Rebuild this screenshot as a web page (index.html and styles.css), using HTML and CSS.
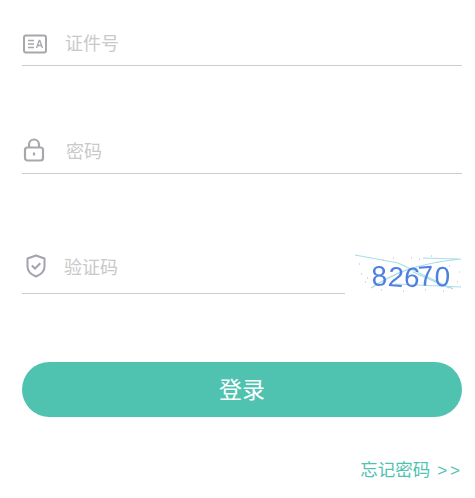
FILE: index.html
```html
<!DOCTYPE html>
<html lang="zh-CN">
<head>
    <meta charset="UTF-8">
    <meta name="viewport" content="width=device-width, initial-scale=1.0">
    <title>登录</title>
    <link rel="stylesheet" href="styles.css">
</head>
<body>

<form class="login">
    <div class="field field-id">
        <svg class="icon" width="24" height="20" viewBox="0 0 24 20" fill="none" stroke="#a8a8ac">
            <rect x="1" y="1.500" width="22" height="17" rx="2" stroke-width="2"/>
            <path d="M5 6.500h6M5 10h6M5 13.500h6" stroke-width="1.300"/>
            <path d="M13.500 14l2.700-7.500h.6l2.700 7.500M14.600 11.500h3.800" stroke-width="1.300"/>
        </svg>
        <span class="placeholder">证件号</span>
    </div>

    <div class="field field-pwd">
        <svg class="icon" width="22" height="24" viewBox="0 0 22 24" fill="none" stroke="#a8a8ac" stroke-width="2.200">
            <rect x="2" y="9.500" width="18" height="13" rx="2.500"/>
            <path d="M6 9.500V6.500a5 5 0 0 1 10 0v3"/>
            <path d="M11 14.500v3"/>
        </svg>
        <span class="placeholder">密码</span>
    </div>

    <div class="captcha-row">
        <div class="field field-code">
            <svg class="icon" width="20" height="24" viewBox="0 0 20 24" fill="none" stroke="#a3a3b0" stroke-width="2">
                <path d="M10 1.500l8.500 3v8c0 4.500-3.500 8-8.500 10-5-2-8.500-5.500-8.500-10v-8z" stroke-linejoin="round"/>
                <path d="M5.800 11.500l3.200 3 5.300-5.300"/>
            </svg>
            <span class="placeholder">验证码</span>
        </div>
        <svg class="captcha" width="110" height="40" viewBox="0 0 110 40">
            <path d="M2 1l43 8 55 26M18 34C40 20 60 10 108 5M42 30l66 3M60 18l36 16M70 4l36 1" fill="none" stroke="#a9dcea" stroke-width="1.200"/>
            <path d="M6 10h1M12 28h1M22 30h1M30 6h1M8 20h1M40 4h1M58 4h1M66 5h1M72 36h1M84 8h1M90 37h1M96 12h1M104 28h1M106 18h1M14 24h1M50 37h1M28 36h1M78 2h1" stroke="#d6c9e6" stroke-width="1.500"/>
            <text x="19" y="32" rotate="-3 4 6 -4 2" class="captcha-text">82670</text>
        </svg>
    </div>

    <button type="button" class="submit">登录</button>

    <a class="forgot" href="#">忘记密码<span class="arrows">&gt;&gt;</span></a>
</form>

</body>
</html>
```

FILE: styles.css
```css
body {
    margin: 0;
    background: #ffffff;
    font-family: "Noto Sans CJK SC", "Liberation Sans", sans-serif;
}
.login {
    display: flex;
    flex-direction: column;
    padding: 0 13px 0 22px;
}
.field {
    display: flex;
    align-items: center;
    border-bottom: 1px solid #cccccc;
    box-sizing: border-box;
}
.field-id {
    height: 66px;
    padding: 22px 0 0 1px;
}
.field-pwd {
    height: 66px;
    margin-top: 42px;
    padding: 18px 0 0 1px;
}
.field-code {
    flex: none;
    width: 323px;
    height: 66px;
    padding: 11px 0 0 4px;
}
.icon {
    flex: none;
}
.field-id .placeholder {
    margin: 0 0 4px 18px;
}
.field-pwd .placeholder {
    margin-left: 21px;
}
.field-code .placeholder {
    margin-left: 18px;
}
.placeholder {
    font-size: 18px;
    color: #c9c9c9;
}
.captcha-row {
    display: flex;
    align-items: flex-end;
    justify-content: space-between;
    margin-top: 54px;
}
.captcha {
    flex: none;
    margin-right: -1px;
    filter: blur(0.4px);
}
.captcha-text {
    font-family: "Liberation Sans", sans-serif;
    font-size: 28px;
    fill: #4f7fe0;
}
.submit {
    height: 55px;
    margin-top: 68px;
    padding: 0 0 3px;
    border: none;
    border-radius: 28px;
    background: #4fc3b0;
    color: #ffffff;
    font-family: inherit;
    font-size: 23px;
    cursor: pointer;
}
.forgot {
    align-self: flex-end;
    margin: 39px -1px 0 0;
    font-size: 17.5px;
    line-height: 26px;
    color: #4fc3b0;
    text-decoration: none;
}
.arrows {
    margin-left: 7px;
    font-family: "Liberation Sans", sans-serif;
    font-size: 17px;
    letter-spacing: 3px;
}
```
